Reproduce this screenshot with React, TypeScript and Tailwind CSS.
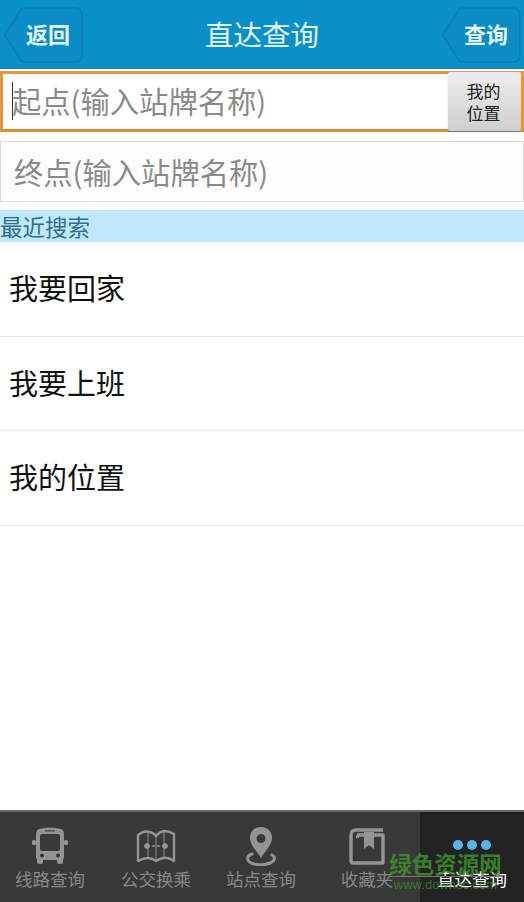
const cjk = { fontFamily: '"Noto Sans CJK SC", sans-serif' };

function BackTag({ label }: { label: string }) {
  return (
    <div className="relative h-[56px] w-[80px]">
      <svg className="absolute inset-0" width="80" height="56" viewBox="0 0 80 56">
        <path
          d="M1.5 28 L18 2.5 Q19 1 21 1 H72 Q79 1 79 8 V48 Q79 55 72 55 H21 Q19 55 18 53.5 Z"
          fill="#0a8cc6"
          stroke="#0b7db4"
          strokeWidth="1.5"
        />
      </svg>
      <span className="absolute left-[23px] top-[11px] text-[22px] leading-[30px] font-bold text-[#e4f6fc]">{label}</span>
    </div>
  );
}

function BusIcon() {
  return (
    <svg width="38" height="38" viewBox="0 0 38 38">
      <path fillRule="evenodd" fill="#949494" d="M8 2 Q19 -1 30 2 Q33 3 33 8 V30 Q33 32 32 32 V35 Q32 37 30 37 H28 Q26 37 26 35 V33 H12 V35 Q12 37 10 37 H8 Q6 37 6 35 V32 Q5 32 5 30 V8 Q5 3 8 2 Z M9 9 V22 Q9 24 11 24 H27 Q29 24 29 22 V9 Q29 7 27 7 H11 Q9 7 9 9 Z" />
      <rect x="1" y="13" width="4" height="5" rx="1.5" fill="#949494" />
      <rect x="33" y="13" width="4" height="5" rx="1.5" fill="#949494" />
      <circle cx="11" cy="28.5" r="2" fill="#333" />
      <circle cx="27" cy="28.5" r="2" fill="#333" />
      <rect x="14" y="3" width="10" height="1.6" fill="#555" />
    </svg>
  );
}

function MapIcon() {
  return (
    <svg width="40" height="34" viewBox="0 0 40 34" fill="none" stroke="#949494">
      <path strokeWidth="2.4" strokeLinejoin="round" d="M2 6 Q8 1 14 3 Q18 4 20 7 Q23 3 28 2 Q33 2 38 5 V32 Q32 28 27 29 Q23 30 20 32 Q16 29 12 29 Q7 29 2 32 Z" />
      <path strokeWidth="1.6" d="M20 7 V32 M12 4 V29 M28 3 V29" opacity="0.6" />
      <path strokeWidth="1.4" strokeDasharray="3 2" d="M11 17 H29" />
      <circle cx="11" cy="17" r="2.8" fill="#949494" stroke="none" />
      <circle cx="29" cy="17" r="2.8" fill="#949494" stroke="none" />
    </svg>
  );
}

function PinIcon() {
  return (
    <svg width="32" height="40" viewBox="0 0 32 40">
      <path fillRule="evenodd" fill="#949494" d="M16 1 C9 1 5 6 5 12 C5 19 12 25 16 32 C20 25 27 19 27 12 C27 6 23 1 16 1 Z M16 8 A4.5 4.5 0 1 1 16 17 A4.5 4.5 0 1 1 16 8 Z" />
      <path fill="none" stroke="#949494" strokeWidth="3" strokeLinecap="round" d="M7 28 C1 30 1 36 9 38 C14 39 20 39 25 37 C30 35 31 31 27 29" />
    </svg>
  );
}

function BookIcon() {
  return (
    <svg width="36" height="38" viewBox="0 0 36 38">
      <path fill="none" stroke="#949494" strokeWidth="3.4" strokeLinejoin="round" d="M2 8 Q2 3 7 3 H34 M2 8 V34 Q2 36 4 36 H34 V8 H8" />
      <path fill="#949494" d="M15 5 H25 V22 L20 18 L15 22 Z" />
      <rect x="7" y="8" width="3" height="3" fill="#949494" />
    </svg>
  );
}

function NavItem({ icon, label, width, active }: { icon: React.ReactNode; label: string; width: string; active?: boolean }) {
  return (
    <div className={`flex h-full ${width} flex-col items-center pt-[15px] ${active ? 'bg-[#232323]' : ''}`}>
      <div className="flex h-[38px] items-center justify-center">{icon}</div>
      <span className={`mt-[2px] text-[17.5px] leading-[24px] whitespace-nowrap ${active ? 'text-white' : 'text-[#878787]'}`}>{label}</span>
    </div>
  );
}

const recent = ['我要回家', '我要上班', '我的位置'];

export default function App() {
  return (
    <div className="flex h-[902px] w-[524px] flex-col overflow-hidden bg-white" style={cjk}>
      <header className="flex h-[69px] shrink-0 items-center justify-between bg-[#0a90c9] pl-[3px] pr-[3px]">
        <BackTag label="返回" />
        <h1 className="text-[28.5px] font-normal text-[#e4f6fc]">直达查询</h1>
        <BackTag label="查询" />
      </header>

      <div className="mt-[2px] flex h-[61px] shrink-0 items-stretch border-[3px] border-[#ea9637] border-b-[#dc8a2e] bg-white">
        <div className="flex flex-1 items-center pb-[2px] pl-[9px] text-[29.3px] whitespace-nowrap text-[#8a8a8a]">
          <span className="mr-[-1px] h-[38px] w-[1px] bg-[#333]" />
          起点(输入站牌名称)
        </div>
        <button className="-mt-[2px] -mb-[2px] flex w-[73px] flex-col items-center justify-center rounded-[2px] bg-gradient-to-b from-[#ededed] to-[#cfcfcf] pr-[2px] text-[17px] leading-[22px] text-[#222] shadow-[0_1px_1px_#777]">
          <span>我的</span>
          <span>位置</span>
        </button>
      </div>

      <div className="mt-[9px] flex h-[61px] shrink-0 items-center border border-[#dcdcdc] bg-[#fdfdfd] pl-[13px] text-[29.3px] whitespace-nowrap text-[#8a8a8a]">
        终点(输入站牌名称)
      </div>

      <div className="mt-[8px] h-[32px] shrink-0 bg-[#bfe8fb] text-[22.5px] leading-[32px] text-[#2f6f8c]">最近搜索</div>

      <ul className="flex-1">
        {recent.map((item) => (
          <li key={item} className="flex h-[94.67px] items-center border-b border-[#e6e6e6] pb-[2px] pl-[9px] text-[29px] text-[#111]">
            {item}
          </li>
        ))}
      </ul>

      <nav className="relative flex h-[92px] shrink-0 border-t-[2px] border-[#6a6a6a] bg-[#393939]">
        <NavItem width="w-[100px]" icon={<BusIcon />} label="线路查询" />
        <NavItem width="w-[112px]" icon={<MapIcon />} label="公交换乘" />
        <NavItem width="w-[98px]" icon={<PinIcon />} label="站点查询" />
        <NavItem width="w-[110px] pl-[4px]" icon={<BookIcon />} label="收藏夹" />
        <NavItem
          width="w-[104px]"
          active
          icon={
            <div className="flex gap-[4px] pb-[3px]">
              <span className="h-[10px] w-[10px] rounded-full bg-[#56b4ea]" />
              <span className="h-[10px] w-[10px] rounded-full bg-[#56b4ea]" />
              <span className="h-[10px] w-[10px] rounded-full bg-[#56b4ea]" />
            </div>
          }
          label="直达查询"
        />
        <div className="pointer-events-none absolute left-[388px] top-[39px] w-[115px] text-center">
          <div className="text-[22.5px] leading-[24px] font-bold whitespace-nowrap text-[#3f8f2a]/85">绿色资源网</div>
          <div className="mt-[1px] border-t border-[#777] text-[13px] leading-[15px] whitespace-nowrap text-[#3f8f2a]/70" style={{ fontFamily: '"Liberation Sans", sans-serif' }}>www.downcc.com</div>
        </div>
      </nav>
    </div>
  );
}
